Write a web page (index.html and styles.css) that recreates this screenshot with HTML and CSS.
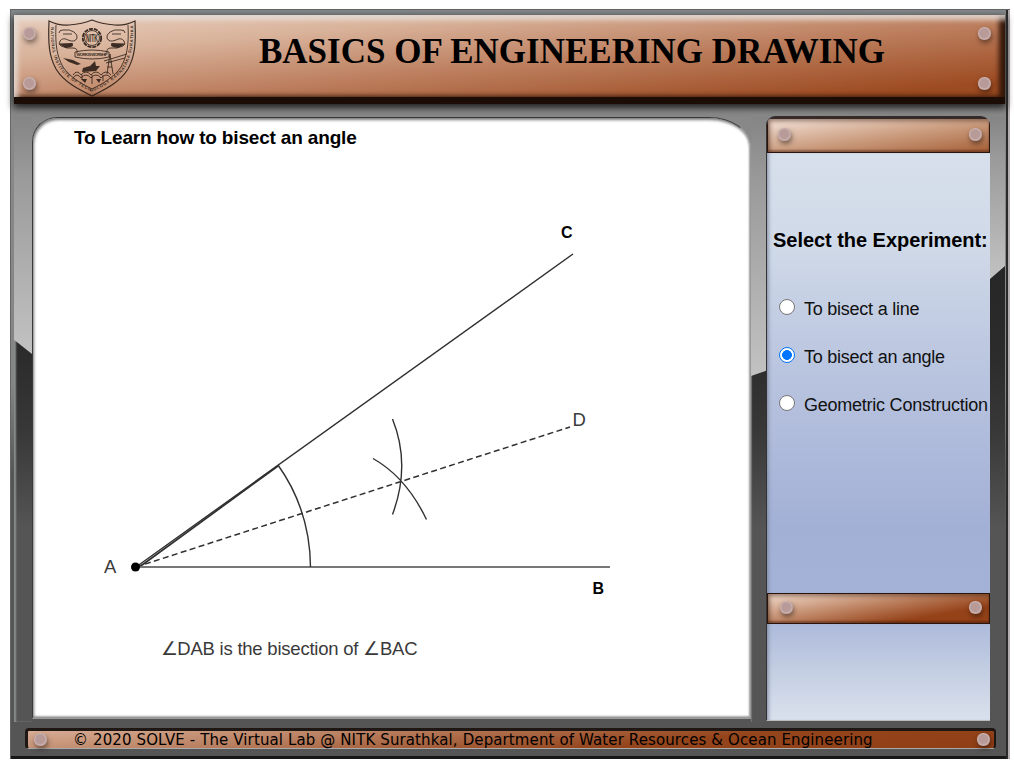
FILE: index.html
```
<!DOCTYPE html>
<html lang="en">
<head>
<meta charset="utf-8">
<title>Basics of Engineering Drawing</title>
<link rel="stylesheet" href="styles.css">
</head>
<body>
<div class="frame">
  <header class="banner">
    <div class="rivets-col"><i class="rivet"></i><i class="rivet"></i></div>
    <svg class="crest" viewBox="0 0 90 80" width="90" height="80">
      <path class="ln edge" d="M2 2Q12 7 22 6Q36 5 45 1Q54 5 68 6Q78 7 88 2C89 25 88 37 81 50C73 63 59 70 45 77C31 70 17 63 9 50C2 37 1 25 2 2Z"/>
      <path class="ln" d="M9 6C8 26 10 37 16 48C23 58 33 64 45 70C57 64 67 58 74 48C80 37 82 26 81 6"/>
      <path id="motto" fill="none" d="M4 6C3 26 6 38 12 49C20 60 33 67 45 73C57 67 70 60 78 49C84 38 87 26 86 6"/>
      <text class="tiny"><textPath href="#motto" startOffset="2" textLength="172">NATIONAL INSTITUTE OF TECHNOLOGY KARNATAKA SURATHKAL</textPath></text>
      <circle cx="45" cy="19" r="9.2" class="ring"/><circle cx="45" cy="19" r="7.5" class="ln"/>
      <text x="45" y="22.5" class="mono" textLength="12" lengthAdjust="spacingAndGlyphs">NITK</text>
      <g class="ln"><path d="M12 14q0-3 4-3q7-1 11 2q4 3 3 6q-2 5-9 2q-5-3-8 1q-2 3 1 5q6 3 12 2q5 0 4 5M78 14q0-3-4-3q-7-1-11 2q-4 3-3 6q2 5 9 2q5-3 8 1q2 3-1 5q-6 3-12 2q-5 0-4 5"/>
      <path d="M28 33q17-4 34 0v5q-17 4-34 0z"/><path d="M12 25h14M64 25h14M16 15h9M65 15h9M57 42L80 35M59 44L78 39"/></g>
      <path d="M12 25l13-1q4 4-6 5zM78 25l-13-1q-4 4 6 5zM16 39l10 2l8 4l-4 1l-8-3zM36 49l7-2l5-5l1 5l4 0l-4 5l-14 1z"/>
      <path class="ln" d="M63 35l-3 20M63 35l3 20M61 43h4M60 48h5"/>
      <path class="ln" d="M26 56q4-6 8 0q5-6 10 0q5-6 10 0q5-6 10 0M26 59q4-6 8 0q5-6 10 0q5-6 10 0q5-6 10 0M35 56v5M45 56v9M56 56v6"/>
      <path d="M34 60h6l-2 4zM49 60h5l-2 4z"/>
      <text x="45" y="37.200" class="tiny center" textLength="31">WORK IS WORSHIP</text>
    </svg>
    <h1 class="title">BASICS OF ENGINEERING DRAWING</h1>
    <div class="rivets-col"><i class="rivet"></i><i class="rivet"></i></div>
  </header>

  <div class="body">
    <div class="rail rail-left"></div>
    <main class="board">
      <h2 class="goal">To Learn how to bisect an angle</h2>
      <svg class="drawing" viewBox="33 161 716 554" width="716" height="554">
        <g class="line">
          <path d="M136 567L573 254"/>
          <path class="arm" d="M138 568L278 466"/>
          <path class="base" d="M136 567H610"/>
          <path d="M278 465Q310 510 310.500 567M392.500 419Q411 465 392.500 514.500M373 458.500Q406 477 426.500 519.500"/>
          <path class="dash" d="M136 567L570 427"/>
        </g>
        <circle cx="135.500" cy="567" r="4.500"/>
        <text x="104" y="573" class="lbl">A</text>
        <text x="572.500" y="425.500" class="lbl">D</text>
        <text x="561" y="238" class="lblb">C</text>
        <text x="592.500" y="594" class="lblb">B</text>
        <text x="160.500" y="654.500" class="lbl" textLength="257">∠DAB is the bisection of ∠BAC</text>
      </svg>
    </main>
    <div class="rail rail-mid"></div>
    <aside class="side">
      <div class="strip strip-top"><i class="rivet"></i><i class="rivet"></i></div>
      <form class="choices">
        <h3 class="pick">Select the Experiment:</h3>
        <label class="opt"><span class="radio"></span>To bisect a line</label>
        <label class="opt"><span class="radio on"></span>To bisect an angle</label>
        <label class="opt"><span class="radio"></span>Geometric Construction</label>
      </form>
      <div class="strip strip-low"><i class="rivet"></i><i class="rivet"></i></div>
      <div class="tray"></div>
    </aside>
    <div class="rail rail-right"></div>
  </div>

  <footer class="foot"><i class="rivet"></i><span class="copy">© 2020 SOLVE - The Virtual Lab @ NITK Surathkal, Department of Water Resources &amp; Ocean Engineering</span><i class="rivet"></i></footer>
</div>
</body>
</html>
```
FILE: styles.css
```
* { box-sizing: border-box; }
body { margin: 0; padding: 9px 0 0 10px; background: #fff; font-family: "Liberation Sans", Arial, sans-serif; color: #000; overflow: hidden; }
.frame {
  width: 1000px; height: 750px; padding: 6px 5px 0 4px; display: flex; flex-direction: column;
  background: linear-gradient(#84888a 0, #888 15%, #858585 50%, #555 62%, #555 100%);
  box-shadow: inset 1px 1px #666, inset -2px 0 #b5afb1, inset -4px 0 #2b2a2b, inset 0 -3px #171717;
}
.banner {
  height: 89px; flex: none; display: flex; padding: 0 13px 0 9px; position: relative; z-index: 1;
  background: linear-gradient(175deg, #e9cfbf 0, #d9b39b 25%, #bd8060 55%, #9d4b21 91%);
  border-bottom: 7px solid #1b0d06;
  box-shadow: inset 6px 7px 5px -2px rgba(230,224,220,.8), inset -7px -2px 5px -1px #35180a, 0 3px 7px 1px #222;
}
.rivets-col { width: 14px; display: flex; flex-direction: column; gap: 37px; padding-top: 12px; }
.rivet {
  display: block; flex: none; width: 13px; height: 13px; border-radius: 6px;
  background: radial-gradient(circle at 48% 48%, #b89a98 0 45%, #c9b2b0 60%, #947774 85%);
  box-shadow: 1px 3px 5px rgba(30,15,10,.5);
}
.crest { flex: none; margin: 4px 0 0 10px; fill: #2c1f18; opacity: .9; }
.ln { fill: none; stroke: #2c1f18; stroke-width: .9; }
.edge { stroke-width: 1.2; }
.ring { fill: none; stroke: #211711; stroke-width: 1.8; stroke-dasharray: 4 1; }
.tiny { font: bold 4.2px "Liberation Sans", sans-serif; }
.mono { font: bold 10px "Liberation Sans", sans-serif; text-anchor: middle; }
.center { text-anchor: middle; }
.title { flex: 1; margin: 0; padding: 16px 0 0 122px; font: bold 35px/42px "Liberation Serif", serif; white-space: nowrap; }

.body { flex: none; display: grid; grid-template-columns: 18px 719px 15px 224px 15px; padding-top: 13px; height: 618px; }
.rail { height: 605px; background: linear-gradient(#1d1d1d, #2c2c2c 40%, #383838 52%, #555 68%, #555); }
.rail::before { content: ""; display: block; background: linear-gradient(#858585, #9a9a9a 25%, #c2c2c2); }
.rail-left::before { clip-path: polygon(0 0, 100% 0, 100% 100%, 0 94%); height: 237px; }
.rail-mid::before { clip-path: polygon(0 0, 100% 0, 100% 98%, 0 100%); height: 259px; }
.rail-right::before { clip-path: polygon(0 0, 100% 0, 100% 92%, 0 100%); height: 162px; }
.rail-left { box-shadow: inset 2px 0 2px #8b9190; }
.rail-mid { box-shadow: inset 1px 0 1px #777; }

.board {
  height: 602px; background: #fff; border: 1px solid #3a3a3a; border-right-color: #999; border-bottom: 2px solid #999;
  border-radius: 25px 42px 0 0 / 25px 30px 0 0; overflow: hidden; box-shadow: inset 1px 2px 3px #777, inset -1px -1px 2px #aaa;
}
.goal { margin: 0; padding: 9px 0 0 41px; height: 43px; font: bold 19px/22px "Liberation Sans", Arial, sans-serif; letter-spacing: -.17px; }
.drawing { display: block; }
.line { fill: none; stroke: #303030; stroke-width: 1.4; }
.line .arm { stroke-width: 1.700; }
.line .base { stroke: #777; stroke-width: 2; }
.line .dash { stroke-width: 1.500; stroke-dasharray: 6 3.400; }
.lbl { font: 18.5px "Liberation Sans", Arial, sans-serif; fill: #3a3a3a; }
.lblb { font: bold 16px "Liberation Sans", Arial, sans-serif; fill: #000; }

.side { height: 605px; display: flex; flex-direction: column; margin-top: -1px; background: #a7b4d7; border-left: 1px solid #333; border-radius: 9px 9px 0 0; overflow: hidden; border-bottom: 1px solid #bbb; }
.strip { flex: none; display: flex; justify-content: space-between; border: 1px solid #2b140b; box-shadow: inset 2px 2px 4px rgba(60,30,15,.5), inset 0 -2px 2px rgba(60,20,5,.4); }
.strip-top { height: 37px; padding: 9px 7px 0 10px; border-top: 3px solid #352b28; background: linear-gradient(172deg, #ecd6c9 10%, #cda083 50%, #aa663f 95%); }
.strip-low { height: 31px; padding: 7px 7px 0 12px; background: linear-gradient(170deg, #ecd2c1 5%, #b97c5a 46%, #954218 75%); }
.choices { height: 440px; flex: none; margin: 0; padding-top: 75px; background: linear-gradient(#d7dfec, #d0dae8 20%, #b9c4df 50%, #a3b0d6 85%, #a5b2d8); box-shadow: inset 4px 0 4px -3px #7a8498; }
.pick { margin: 0 0 45px; padding-left: 6px; font: bold 20px/24px "Liberation Sans", Arial, sans-serif; letter-spacing: -.04px; white-space: nowrap; }
.opt { height: 48px; display: flex; align-items: flex-start; padding-left: 12px; gap: 9px; font-size: 18px; line-height: 25px; letter-spacing: -.24px; color: #111; white-space: nowrap; }
.radio { flex: none; width: 16px; height: 16px; margin-top: 2px; border-radius: 50%; background: #fff; border: 1px solid #767676; }
.radio.on { border: 1.500px solid #0075ff; background: radial-gradient(circle, #0075ff 0 4.600px, #fff 5.200px); }
.tray { flex: 1; background: linear-gradient(#adbadb, #c2cde2 45%, #dae1ed); box-shadow: inset 4px 0 4px -3px #7a8498; }

.foot {
  height: 21px; flex: none; margin: 6px 9px 0 11px; padding: 0 4px 0 6px; display: flex; align-items: center; justify-content: space-between;
  border: 2px solid #1e1713; border-width: 3px 2px 1px 3px; border-bottom-color: #aaa; border-radius: 4px;
  background: linear-gradient(175deg, #d7ad95, #b98061 30%, #95451c 65%, #8f3e15);
}
.copy { flex: 1; padding-left: 26px; font: 15px/18px "DejaVu Sans", Verdana, sans-serif; letter-spacing: .115px; white-space: nowrap; }
```
